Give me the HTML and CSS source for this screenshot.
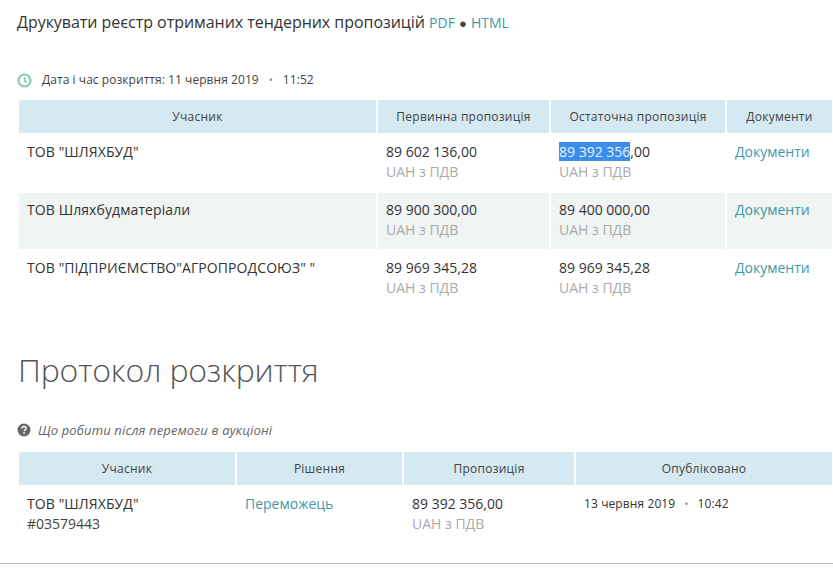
FILE: index.html
```html
<!DOCTYPE html>
<html lang="uk">
<head>
<meta charset="utf-8">
<title>Протокол розкриття</title>
<link rel="stylesheet" href="styles.css">
</head>
<body>
<main class="page">
  <p class="print">Друкувати реєстр отриманих тендерних пропозицій <a href="#">PDF</a> <span class="dot">●</span> <a href="#">HTML</a></p>
  <p class="date">
    <svg class="ico" width="15" height="15" viewBox="0 0 15 15"><circle cx="7.5" cy="7.5" r="6" fill="none" stroke="#86cfa8" stroke-width="2.2"/><path d="M7.5 4v4l2.6 1.4" fill="none" stroke="#86cfa8" stroke-width="1.6"/></svg>
    <span>Дата і час розкриття: 11 червня 2019 <span class="sep">•</span> 11:52</span>
  </p>
  <table class="tbl tbl-a">
    <thead><tr><th class="a1">Учасник</th><th class="a2">Первинна пропозиція</th><th class="a3">Остаточна пропозиція</th><th class="a4">Документи</th></tr></thead>
    <tbody>
      <tr><td class="name">ТОВ "ШЛЯХБУД"</td><td>89 602 136,00<small>UAH з ПДВ</small></td><td><mark>89 392 356</mark>,00<small>UAH з ПДВ</small></td><td><a href="#">Документи</a></td></tr>
      <tr class="alt"><td class="name">ТОВ Шляхбудматеріали</td><td>89 900 300,00<small>UAH з ПДВ</small></td><td>89 400 000,00<small>UAH з ПДВ</small></td><td><a href="#">Документи</a></td></tr>
      <tr><td class="name">ТОВ "ПІДПРИЄМСТВО"АГРОПРОДСОЮЗ" "</td><td>89 969 345,28<small>UAH з ПДВ</small></td><td>89 969 345,28<small>UAH з ПДВ</small></td><td><a href="#">Документи</a></td></tr>
    </tbody>
  </table>
  <h1 class="title">Протокол розкриття</h1>
  <p class="help">
    <svg class="ico" width="14" height="14" viewBox="0 0 14 14"><circle cx="7" cy="7" r="6.5" fill="#666"/><path d="M4.9 5.4c0-1.2 1-1.9 2.2-1.9s2.1.7 2.1 1.8c0 1.6-2 1.5-2 3" fill="none" stroke="#fff" stroke-width="1.4"/><rect x="6.3" y="9.3" width="1.6" height="1.6" fill="#fff"/></svg>
    <em>Що робити після перемоги в аукціоні</em>
  </p>
  <table class="tbl tbl-b">
    <thead><tr><th class="b1">Учасник</th><th class="b2">Рішення</th><th class="b3">Пропозиція</th><th class="b4">Опубліковано</th></tr></thead>
    <tbody>
      <tr><td class="name">ТОВ "ШЛЯХБУД"<small class="plain">#03579443</small></td><td><a href="#">Переможець</a></td><td>89 392 356,00<small>UAH з ПДВ</small></td><td class="when">13 червня 2019 <span class="sep">•</span> 10:42</td></tr>
    </tbody>
  </table>
</main>
</body>
</html>
```
FILE: styles.css
```css
* { box-sizing: border-box; }
html, body { margin: 0; background: #fff; }
body { font-family: "Open Sans", sans-serif; color: #333; height: 570px; overflow: hidden; }
.page { height: 564px; border-bottom: 1px solid #bbb; padding-top: 11px; }
a { color: #3f98a6; text-decoration: none; }
.print { margin: 0 0 0 17px; font-size: 16px; line-height: 22px; letter-spacing: -0.04px; color: #333; }
.print a { font-size: 14px; letter-spacing: 0; }
.dot { font-size: 13px; color: #444; }
.date { margin: 38px 0 0 17px; height: 26px; display: flex; align-items: flex-start; gap: 10px; font-size: 12px; line-height: 16px; letter-spacing: 0.05px; color: #444; }
.sep { color: #888; margin: 0 7px; font-size: 10px; }
.ico { flex: none; margin-top: 1px; }
.tbl { margin-left: 17px; width: 817px; table-layout: fixed; border-collapse: separate; border-spacing: 2px; }
.tbl th { height: 33px; padding: 0; background: #d4e9f1; font-size: 12px; font-weight: 400; letter-spacing: 0.25px; text-align: center; color: #444; }
.tbl td { padding: 7px 8px 0; height: 56px; vertical-align: top; font-size: 14px; line-height: 20px; color: #333; }
.tbl .name { letter-spacing: 0.09px; }
.tbl a { font-size: 14px; }
.alt td { background: #f0f4f2; }
small { display: block; font-size: 14px; line-height: 20px; letter-spacing: 0; color: #aaa; }
small.plain { color: #444; }
mark { background: #3b8ee8; color: #e8f2fc; }
.a1 { width: 357px; } .a2 { width: 171px; } .a3 { width: 174px; } .a4 { width: 105px; }
.title { margin: 39px 0 0 18px; font-size: 32px; line-height: 44px; font-weight: 300; letter-spacing: -0.17px; color: #555; }
.help { margin: 30px 0 0 17px; height: 28px; display: flex; align-items: flex-start; gap: 7px; font-size: 13px; line-height: 16px; letter-spacing: 0.15px; color: #666; }
.b1 { width: 216px; } .b2 { width: 165px; } .b3 { width: 170px; } .b4 { width: 256px; }
.tbl-b .when { padding-top: 8px; font-size: 12px; line-height: 18px; letter-spacing: 0.1px; }
.tbl-b .when .sep { margin: 0 6px; }
```
